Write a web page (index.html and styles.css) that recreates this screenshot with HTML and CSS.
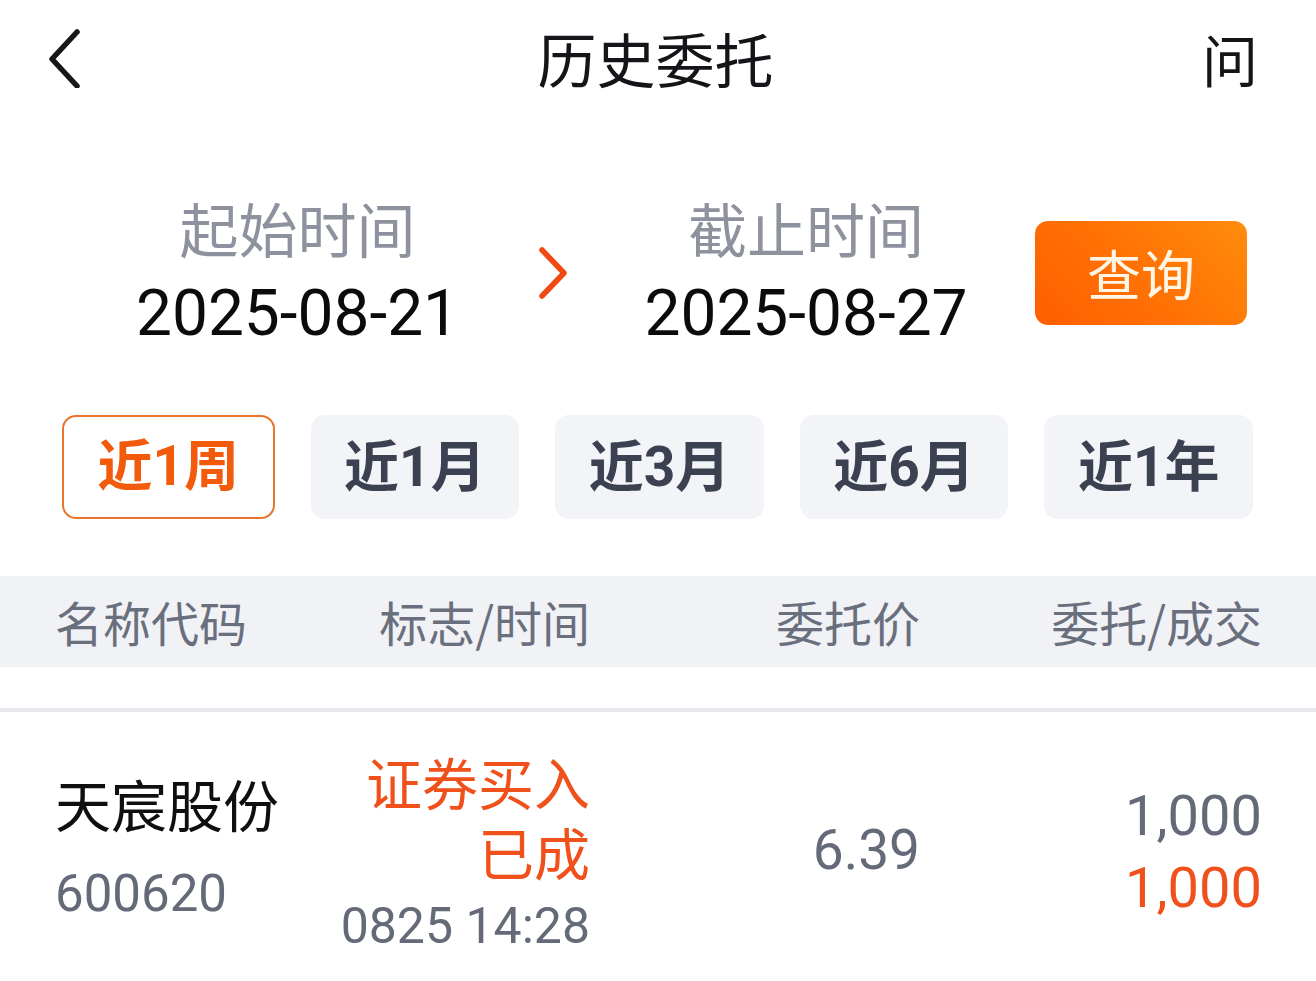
FILE: index.html
```html
<!DOCTYPE html>
<html lang="zh-CN">
<head>
<meta charset="utf-8">
<title>历史委托</title>
<link rel="stylesheet" href="styles.css">
</head>
<body>
<div class="page">
  <header class="nav">
    <div class="nav-left">
      <svg class="back" width="40" height="60" viewBox="0 0 40 60">
        <path d="M32 4 L7 31 L32 58" fill="none" stroke="#16171a" stroke-width="5.5" stroke-linecap="round" stroke-linejoin="round"/>
      </svg>
    </div>
    <h1 class="title">历史委托</h1>
    <div class="nav-right"><span class="ask">问</span></div>
  </header>

  <section class="dates">
    <div class="date-block">
      <div class="date-label">起始时间</div>
      <div class="date-value">2025-08-21</div>
    </div>
    <div class="date-arrow">
      <svg width="34" height="54" viewBox="0 0 34 54">
        <path d="M6 4 L28 27 L6 50" fill="none" stroke="#f04a12" stroke-width="5.5" stroke-linecap="round" stroke-linejoin="round"/>
      </svg>
    </div>
    <div class="date-block date-block-end">
      <div class="date-label">截止时间</div>
      <div class="date-value">2025-08-27</div>
    </div>
    <button class="query">查询</button>
  </section>

  <nav class="ranges">
    <div class="range active">近1周</div>
    <div class="range">近1月</div>
    <div class="range">近3月</div>
    <div class="range">近6月</div>
    <div class="range">近1年</div>
  </nav>

  <div class="thead">
    <div class="th th-name">名称代码</div>
    <div class="th th-flag">标志/时间</div>
    <div class="th th-price">委托价</div>
    <div class="th th-qty">委托/成交</div>
  </div>

  <div class="divider"></div>

  <div class="row">
    <div class="cell cell-name">
      <div class="stock-name">天宸股份</div>
      <div class="stock-code">600620</div>
    </div>
    <div class="cell cell-flag">
      <div class="flag">证券买入<br>已成</div>
      <div class="time">0825 14:28</div>
    </div>
    <div class="cell cell-price">
      <div class="price">6.39</div>
    </div>
    <div class="cell cell-qty">
      <div class="qty">1,000</div>
      <div class="qty qty-done">1,000</div>
    </div>
  </div>
</div>
</body>
</html>
```

FILE: styles.css
```css
* { box-sizing: border-box; }
html, body {
  margin: 0;
  padding: 0;
  background: #ffffff;
}
body {
  font-family: "Noto Sans CJK SC", "Noto Sans", sans-serif;
  color: #141518;
}
.page {
  width: 1316px;
}

/* nav */
.nav {
  height: 116px;
  display: grid;
  grid-template-columns: 1fr auto 1fr;
  align-items: center;
  padding: 0 58px 0 45px;
}
.nav-left { display: flex; align-items: center; }
.back { display: block; }
.title {
  margin: 0 0 0 8px;
  font-size: 59px;
  font-weight: 400;
  line-height: 116px;
  color: #141518;
}
.nav-right { display: flex; justify-content: flex-end; }
.ask {
  font-size: 56px;
  line-height: 116px;
  color: #141518;
}

/* dates */
.dates {
  display: flex;
  align-items: center;
  padding: 77px 0 0 100px;
  height: 237px;
}
.date-block {
  width: 395px;
  display: flex;
  flex-direction: column;
  align-items: center;
}
.date-block-end { width: 392px; }
.date-label {
  font-size: 59px;
  line-height: 72px;
  color: #8d929e;
}
.date-value {
  margin-top: 10px;
  font-family: Roboto, "Noto Sans", sans-serif;
  font-size: 64px;
  line-height: 80px;
  color: #0b0b0c;
}
.date-arrow {
  width: 115px;
  display: flex;
  justify-content: center;
}
.date-arrow svg { display: block; }
.query {
  margin-left: 33px;
  width: 212px;
  height: 104px;
  border: 0;
  border-radius: 13px;
  background: linear-gradient(225deg, #ff8c0c 0%, #ff7205 50%, #ff5e00 100%);
  color: #fff6e6;
  font-family: "Noto Sans CJK SC", sans-serif;
  font-size: 54px;
  line-height: 104px;
  padding: 0;
}

/* ranges */
.ranges {
  display: flex;
  gap: 36px;
  padding: 0 63px 0 62px;
  margin-top: 62px;
}
.range {
  flex: 1;
  height: 104px;
  border-radius: 14px;
  background: #f3f4f8;
  color: #3b4150;
  font-family: Roboto, "Noto Sans CJK SC", sans-serif;
  font-weight: 700;
  font-size: 55px;
  line-height: 104px;
  text-align: center;
}
.range.active {
  background: #ffffff;
  border: 2.5px solid #e8742e;
  color: #f25a0c;
  line-height: 99px;
}

/* table header */
.thead {
  margin-top: 57px;
  height: 91px;
  background: #f1f2f6;
  display: grid;
  grid-template-columns: 275px 260px 330px 342px;
  padding: 0 54px 0 55px;
  align-items: center;
}
.th {
  font-size: 48px;
  line-height: 91px;
  color: #6a6f7d;
  white-space: nowrap;
}
.th-name { text-align: left; }
.th-flag, .th-price, .th-qty { text-align: right; }

.divider {
  margin-top: 41px;
  height: 4px;
  background: #e8e9ec;
}

/* row */
.row {
  display: grid;
  grid-template-columns: 275px 260px 330px 342px;
  padding: 0 54px 0 55px;
  align-items: start;
  height: 265px;
}
.cell-name { margin-top: 55px; }
.stock-name {
  font-size: 56px;
  line-height: 72px;
  color: #0e0f11;
  white-space: nowrap;
}
.stock-code {
  margin-top: 20px;
  font-family: Roboto, sans-serif;
  font-size: 51px;
  line-height: 70px;
  color: #646a78;
}
.cell-flag {
  margin-top: 34px;
  text-align: right;
}
.flag {
  font-size: 56px;
  line-height: 70px;
  color: #f0501a;
  white-space: nowrap;
}
.time {
  margin-top: 5px;
  font-family: Roboto, sans-serif;
  font-size: 50px;
  line-height: 70px;
  color: #646a78;
  white-space: nowrap;
}
.cell-price {
  margin-top: 103px;
  text-align: right;
}
.price {
  font-family: Roboto, sans-serif;
  font-size: 55px;
  line-height: 70px;
  color: #646a78;
}
.cell-qty {
  margin-top: 68px;
  text-align: right;
}
.qty {
  font-family: Roboto, sans-serif;
  font-size: 56px;
  line-height: 72px;
  color: #646a78;
}
.qty-done { color: #f0501a; }
```
